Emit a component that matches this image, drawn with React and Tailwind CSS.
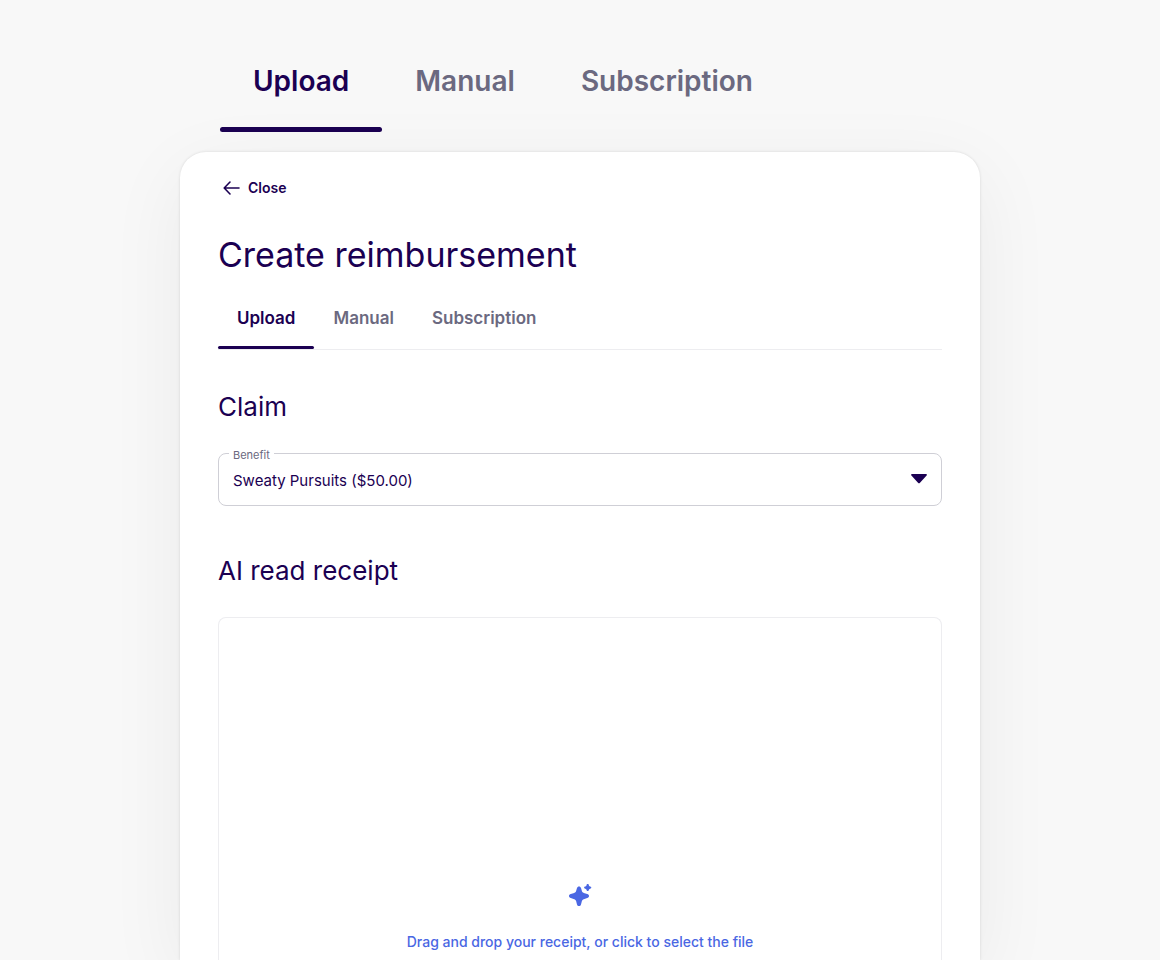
import { useState } from "react";
import clsx from "clsx";

const TABS = ["Upload", "Manual", "Subscription"];

const BENEFITS = [{ id: "sweaty-pursuits", label: "Sweaty Pursuits ($50.00)" }];

function Tabs({ active, onChange, large = false }) {
  return (
    <div role="tablist" className={clsx("flex", !large && "border-b border-[#ededf0]")}>
      {TABS.map((tab) => (
        <button
          key={tab}
          type="button"
          role="tab"
          aria-selected={tab === active}
          onClick={() => onChange(tab)}
          className={clsx(
            "flex flex-col font-semibold",
            large ? "gap-7 text-[28px] leading-9" : "gap-4 text-[17px] leading-6",
            tab === active ? "text-[#1b0052]" : "text-[#6b6980]",
          )}
        >
          <span className={large ? "px-[33px]" : "px-[19px]"}>{tab}</span>
          <span
            className={clsx(
              "w-full rounded-full",
              large ? "h-[5px]" : "h-[3px]",
              tab === active && "bg-[#1b0052]",
            )}
          />
        </button>
      ))}
    </div>
  );
}

function BackArrow() {
  return (
    <svg
      width="18"
      height="16"
      viewBox="0 0 18 16"
      fill="none"
      stroke="currentColor"
      strokeWidth="1.6"
      strokeLinecap="round"
      strokeLinejoin="round"
      aria-hidden="true"
    >
      <path d="M17 8H2.500M8 2 2.200 8 8 14" />
    </svg>
  );
}

function Sparkle() {
  return (
    <svg width="24" height="24" viewBox="0 0 24 24" fill="currentColor" aria-hidden="true">
      <path d="M11 2.500c1 0 1.700.6 2 1.600l.9 3c.3 1 .9 1.600 1.900 1.900l3.400 1.100c1.100.4 1.800 1 1.800 2s-.7 1.700-1.800 2l-3.400 1.100c-1 .3-1.600.9-1.900 1.900l-.9 3.300c-.3 1-1 1.700-2 1.700s-1.700-.7-2-1.700l-.9-3.300c-.3-1-.9-1.600-1.900-1.900l-3.400-1.100c-1.100-.3-1.800-1-1.800-2s.7-1.600 1.800-2L6.200 9c1-.3 1.600-.9 1.900-1.900l.9-3c.3-1 1-1.600 2-1.600Z" />
      <path d="M19.700 0c.7 0 1 .4 1.100 1 .1.800.5 1.200 1.300 1.400.7.100 1.200.500 1.200 1.100s-.5 1-1.200 1.200c-.8.2-1.200.600-1.300 1.300-.1.700-.4 1.100-1.100 1.100s-1-.4-1.100-1.100c-.1-.7-.5-1.100-1.300-1.300-.7-.2-1.200-.6-1.200-1.200s.5-1 1.200-1.100c.8-.2 1.200-.6 1.300-1.400.1-.6.4-1 1.100-1Z" />
    </svg>
  );
}

function BenefitSelect() {
  return (
    <div className="relative mt-7">
      <label
        htmlFor="benefit"
        className="absolute left-[11px] -top-2 bg-white px-1 text-[11px] leading-5 text-[#6b6980]"
      >
        Benefit
      </label>
      <select
        id="benefit"
        className="h-[53px] w-full appearance-none rounded-lg border border-[#cfcfd6] bg-white pl-[14px] pr-10 pt-1 text-[15px] text-[#1b0052]"
      >
        {BENEFITS.map(({ id, label }) => (
          <option key={id} value={id}>
            {label}
          </option>
        ))}
      </select>
      <svg
        className="pointer-events-none absolute right-[15px] top-[21px] text-[#1b0052]"
        width="16"
        height="10"
        viewBox="0 0 16 10"
        fill="currentColor"
        aria-hidden="true"
      >
        <path d="M1 0h14c.9 0 1.200 1 .6 1.600L9 8.700a1.400 1.400 0 0 1-2 0L.4 1.600C-.2 1 .1 0 1 0Z" />
      </svg>
    </div>
  );
}

export default function App() {
  const [tab, setTab] = useState("Upload");

  return (
    <main
      className="flex h-screen flex-col items-center overflow-hidden bg-[#f8f8f8] text-[#1b0052]"
      style={{ fontFamily: "Inter, 'Liberation Sans', sans-serif" }}
    >
      <div className="flex w-full max-w-[800px] flex-1 flex-col pt-[63px]">
        <div className="px-10">
          <Tabs active={tab} onChange={setTab} large />
        </div>

        <section className="mt-5 flex flex-1 flex-col rounded-t-[26px] bg-white px-[38px] pt-6 shadow-[0_0_3px_rgba(0,0,0,0.12),0_20px_80px_rgba(0,0,0,0.06)]">
          <button
            type="button"
            className="flex items-center gap-2 self-start pl-1 text-sm leading-6 font-semibold"
          >
            <BackArrow />
            Close
          </button>

          <h1 className="mt-8 text-[34px] leading-[46px]">Create reimbursement</h1>

          <div className="mt-7">
            <Tabs active={tab} onChange={setTab} />
          </div>

          <h2 className="mt-[39px] text-[26px] leading-9">Claim</h2>
          <BenefitSelect />

          <h2 className="mt-[47px] text-[26px] leading-9">AI read receipt</h2>

          {/* Drop zone */}
          <label className="mt-7 flex flex-1 cursor-pointer flex-col items-center justify-end gap-6 rounded-t-lg border border-b-0 border-[#ededf0] pb-2 text-sm leading-5 font-medium text-[#4a67e3]">
            <Sparkle />
            Drag and drop your receipt, or click to select the file
            <input type="file" className="sr-only" />
          </label>
        </section>
      </div>
    </main>
  );
}
